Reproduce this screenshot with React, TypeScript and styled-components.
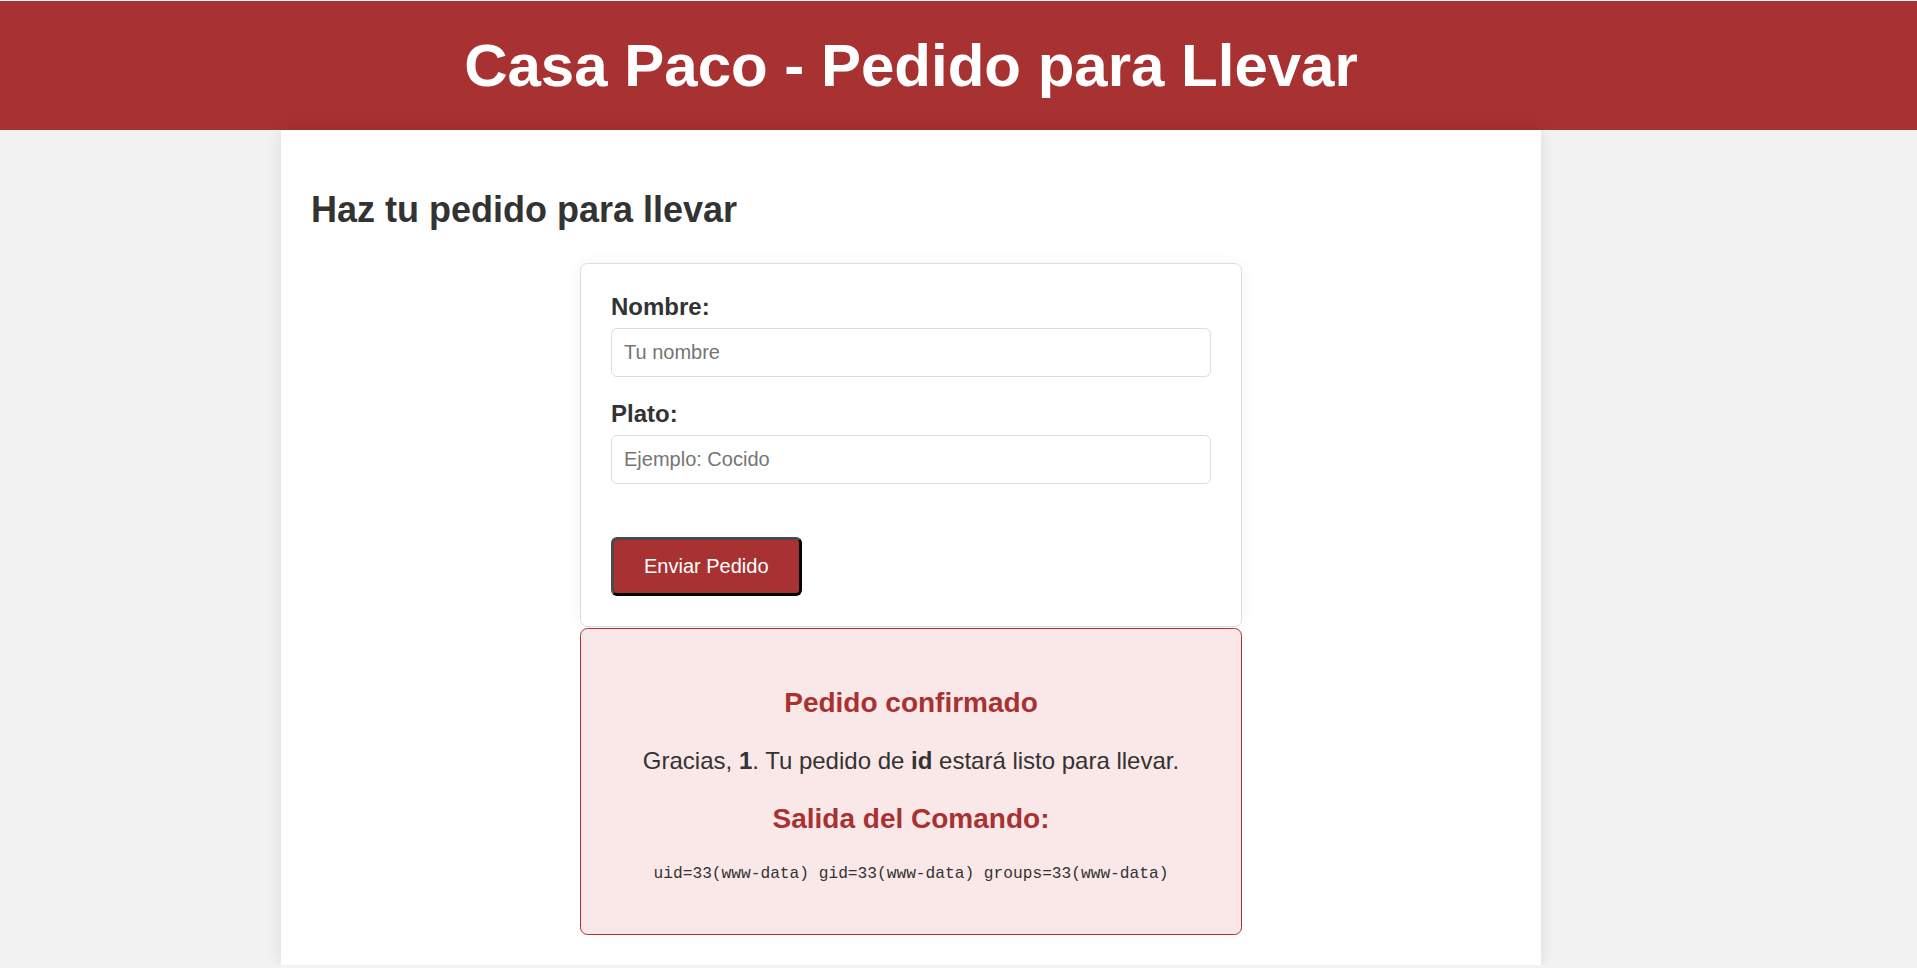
import styled, { createGlobalStyle } from 'styled-components'

const GlobalStyle = createGlobalStyle`
  html, body {
    margin: 0;
    padding: 0;
  }
  body {
    background: #f2f2f2;
    font-family: 'Liberation Sans', Arial, sans-serif;
    color: #333;
  }
`

const brand = '#a83232'

const Header = styled.header`
  background: ${brand};
  border-top: 1px solid #fff;
  padding: 30px 0;
`

const HeaderInner = styled.div`
  width: 1260px;
  margin-left: 281px;
  text-align: center;
`

const Title = styled.h1`
  margin: 0;
  font-size: 60px;
  font-weight: 700;
  line-height: normal;
  color: #fff;
`

const Main = styled.main`
  width: 1260px;
  box-sizing: border-box;
  margin-left: 281px;
  padding: 30px;
  background: #fff;
  box-shadow: 0 0 15px rgba(0, 0, 0, 0.1);
`

const PageTitle = styled.h2`
  margin: 28.5px 0 32.5px;
  font-size: 36px;
  font-weight: 700;
  line-height: normal;
  color: #333;
`

const Card = styled.form`
  width: 662px;
  box-sizing: border-box;
  margin: 0 auto;
  padding: 29px 30px 30px;
  background: #fff;
  border: 1px solid #ddd;
  border-radius: 7.5px;
  box-shadow: 0 0 15px rgba(0, 0, 0, 0.05);
`

const Label = styled.label`
  display: block;
  margin-bottom: 7px;
  font-size: 24px;
  font-weight: 700;
  line-height: normal;
  color: #333;
`

const Input = styled.input`
  display: block;
  width: 100%;
  box-sizing: border-box;
  margin: 0 0 22.5px;
  padding: 12px;
  font-family: 'Liberation Sans', Arial, sans-serif;
  font-size: 20px;
  line-height: normal;
  color: #333;
  border: 1px solid #ddd;
  border-radius: 6px;
  outline: none;

  &::placeholder {
    color: #757575;
  }
`

const SubmitButton = styled.button`
  display: block;
  margin-top: 53px;
  padding: 15px 30px;
  font-family: 'Liberation Sans', Arial, sans-serif;
  font-size: 20px;
  line-height: normal;
  color: #fff;
  background: ${brand};
  border-style: solid;
  border-width: 3px;
  border-color: #4a4a4a #000 #000 #4a4a4a;
  border-radius: 6px;
  cursor: pointer;
`

const Result = styled.section`
  width: 662px;
  box-sizing: border-box;
  margin: 1px auto 0;
  padding: 30px;
  background: #fae8e8;
  border: 1px solid ${brand};
  border-radius: 7.5px;
  text-align: center;
`

const ResultTitle = styled.h3`
  margin: 28px 0;
  font-size: 28px;
  font-weight: 700;
  line-height: normal;
  color: ${brand};
`

const Message = styled.p`
  margin: 24px 0;
  font-size: 24px;
  line-height: normal;
  color: #333;
`

const Output = styled.pre`
  margin: 19.5px 0;
  font-family: 'Liberation Mono', 'Courier New', monospace;
  font-size: 16.2px;
  line-height: 22px;
  color: #333;
  white-space: pre;
`

export default function App() {
  return (
    <>
      <GlobalStyle />
      <Header>
        <HeaderInner>
          <Title>Casa Paco - Pedido para Llevar</Title>
        </HeaderInner>
      </Header>
      <Main>
        <PageTitle>Haz tu pedido para llevar</PageTitle>
        <Card onSubmit={(e) => e.preventDefault()}>
          <Label htmlFor='nombre'>Nombre:</Label>
          <Input id='nombre' type='text' placeholder='Tu nombre' />
          <Label htmlFor='plato'>Plato:</Label>
          <Input id='plato' type='text' placeholder='Ejemplo: Cocido' />
          <SubmitButton type='submit'>Enviar Pedido</SubmitButton>
        </Card>
        <Result>
          <ResultTitle>Pedido confirmado</ResultTitle>
          <Message>
            Gracias, <strong>1</strong>. Tu pedido de <strong>id</strong> estará listo para llevar.
          </Message>
          <ResultTitle>Salida del Comando:</ResultTitle>
          <Output>uid=33(www-data) gid=33(www-data) groups=33(www-data)</Output>
        </Result>
      </Main>
    </>
  )
}
